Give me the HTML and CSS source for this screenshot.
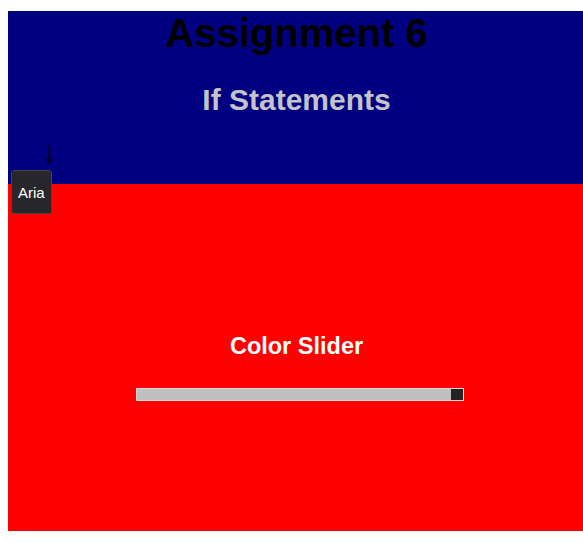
FILE: index.html
```html
<!DOCTYPE html>
<html lang="en">
<head>
<meta charset="utf-8">
<title>Assignment 6</title>
<link rel="stylesheet" href="styles.css">
</head>
<body>
<div class="page">
  <header class="hero">
    <h1 class="title">Assignment 6</h1>
    <h2 class="subtitle">If Statements</h2>
  </header>
  <section class="panel">
    <h2 class="panel-title">Color Slider</h2>
    <input class="slider" type="range" min="0" max="255" value="255" aria-label="Color">
  </section>
  <svg class="pointer" width="8" height="19" viewBox="0 0 8 19" aria-hidden="true">
    <line x1="4" y1="0" x2="4" y2="17.5" stroke="#000" stroke-width="1.3"/>
    <path d="M1.5 13.5 L4 18 L6.5 13.5" fill="none" stroke="#000" stroke-width="1.2"/>
  </svg>
  <div class="tip">Aria</div>
</div>
</body>
</html>
```
FILE: styles.css
```css
html, body {
  margin: 0;
  padding: 0;
  background: #fff;
}
.page {
  position: relative;
  padding: 11px 0 12px 8px;
  font-family: "Liberation Sans", Arial, sans-serif;
}
.hero {
  background: #000080;
  padding: 2px 0 69px 2px;
  text-align: center;
}
.title {
  margin: 0;
  font-size: 40px;
  line-height: 40px;
  font-weight: bold;
  color: #000;
}
.subtitle {
  margin: 32px 0 0;
  font-size: 30px;
  line-height: 30px;
  font-weight: bold;
  color: #c4c4c8;
}
.panel {
  background: #ff0000;
  padding: 148px 0 130px 2px;
  text-align: center;
}
.panel-title {
  margin: 0;
  font-size: 23.5px;
  line-height: 28px;
  font-weight: bold;
  color: #fff;
}
.slider {
  -webkit-appearance: none;
  appearance: none;
  display: block;
  box-sizing: border-box;
  width: 328px;
  height: 13px;
  margin: 28px 0 0 126px;
  padding: 0;
  background: #c0c0c0;
  border: 1px solid #d8d8d8;
  outline: none;
}
.slider::-webkit-slider-thumb {
  -webkit-appearance: none;
  appearance: none;
  width: 12px;
  height: 11px;
  background: #232323;
  border: none;
  border-radius: 0;
}
.pointer {
  position: absolute;
  left: 45px;
  top: 145px;
}
.tip {
  position: absolute;
  left: 11px;
  top: 170px;
  box-sizing: border-box;
  width: 41px;
  height: 44px;
  padding-top: 13px;
  padding-left: 6px;
  background: #27262b;
  border: 1px solid #45444a;
  border-radius: 3px;
  color: #fff;
  font-size: 15px;
  line-height: 17px;
  text-align: left;
}
```
